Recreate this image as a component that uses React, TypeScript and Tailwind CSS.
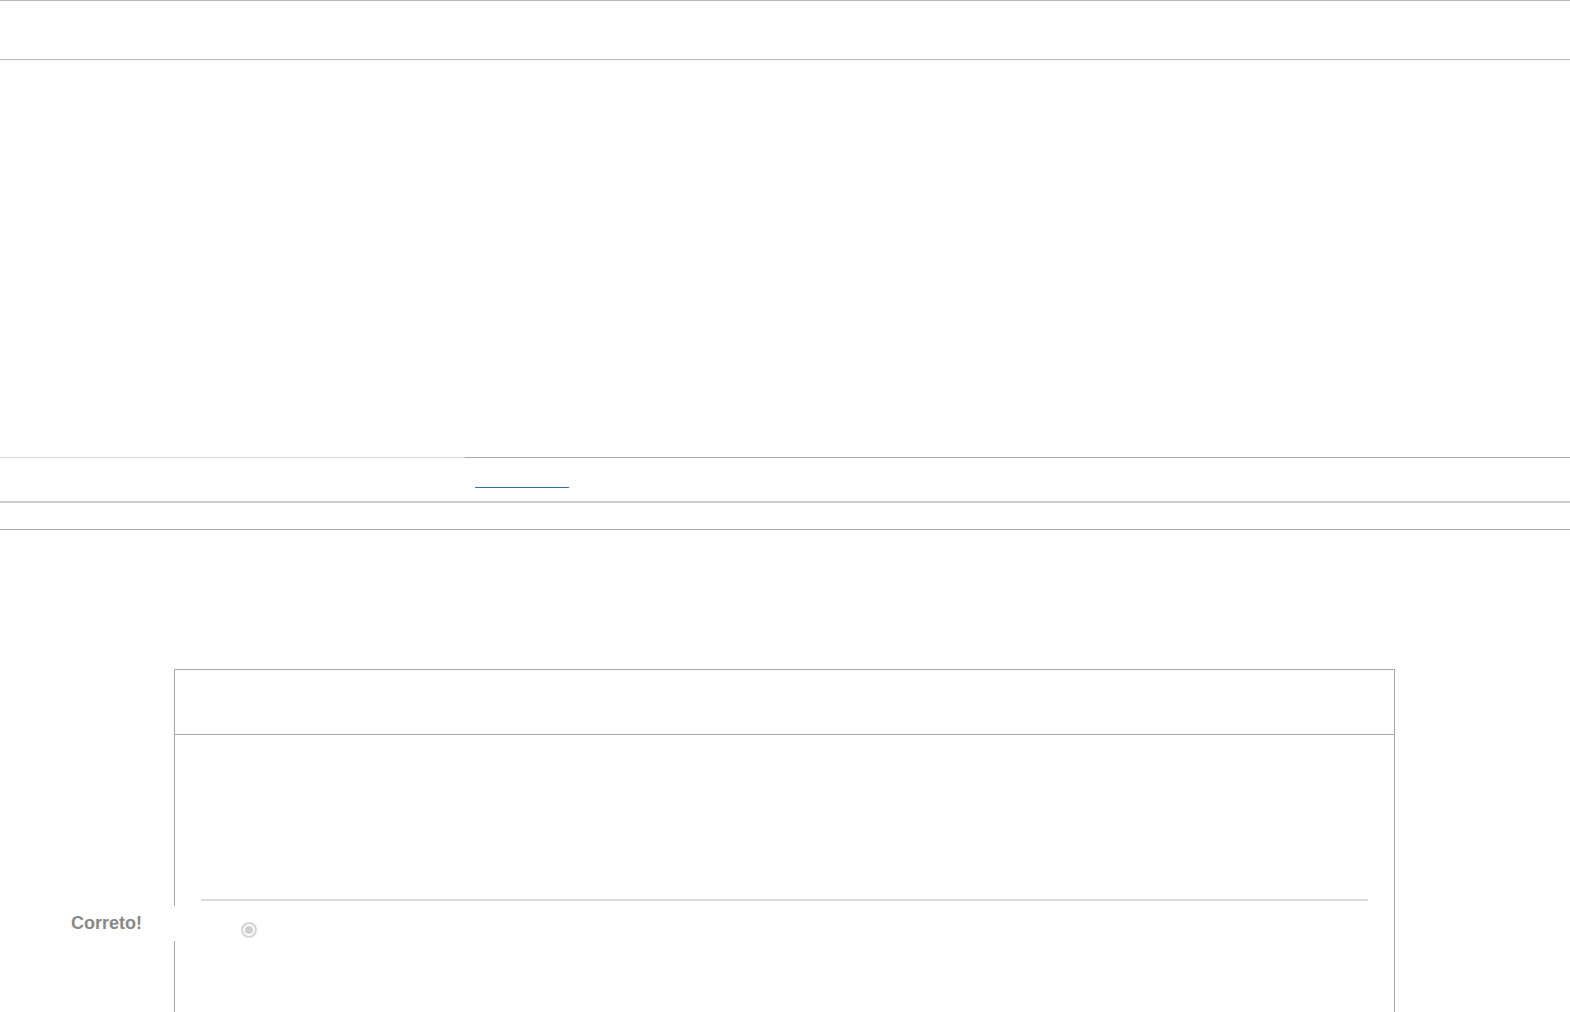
import React from 'react';

const App: React.FC = () => {
  return (
    <div className="min-h-screen bg-white" style={{ fontFamily: '"Liberation Sans", Arial, sans-serif' }}>
      {/* top header */}
      <div className="h-[60px] border-y border-[#b8b8b8]"></div>

      {/* empty content area */}
      <div className="h-[397px]"></div>

      {/* tab bar */}
      <div className="flex h-[46px] border-b-2 border-[#c8cdd1]">
        <div className="w-[465px] border-t border-[#d6d6d6]"></div>
        <div className="flex-1 border-t border-[#a9a9a9] pl-[10px]">
          <div className="mt-[29px] h-px w-[94px] bg-[#2a74b0]"></div>
        </div>
      </div>

      {/* sub bar */}
      <div className="h-[27px] border-b border-[#aaaaaa]"></div>

      <div className="h-[139px]"></div>

      {/* question box */}
      <div className="relative ml-[174px] w-[1221px] border border-[#a8a8a8] border-b-0">
        <div className="h-[65px] border-b border-[#a8a8a8]"></div>
        <div className="h-[360px] px-[26px] pt-[164px]">
          <div className="h-[2px] bg-[#dddddd]"></div>
          <div className="mt-[21px] flex items-center pl-[40px]">
            <input
              type="radio"
              checked
              disabled
              readOnly
              className="m-0 h-4 w-4 appearance-none rounded-full border-2 border-[#d6d6d6] bg-[#d0d0d0] shadow-[inset_0_0_0_2px_#ffffff]"
            />
          </div>
        </div>
        <div className="absolute left-[-124px] top-[236px] flex h-[35px] w-[127px] items-center bg-white pl-[20px] text-[18px] font-bold text-[#888888]">
          Correto!
        </div>
      </div>
    </div>
  );
};

export default App;
